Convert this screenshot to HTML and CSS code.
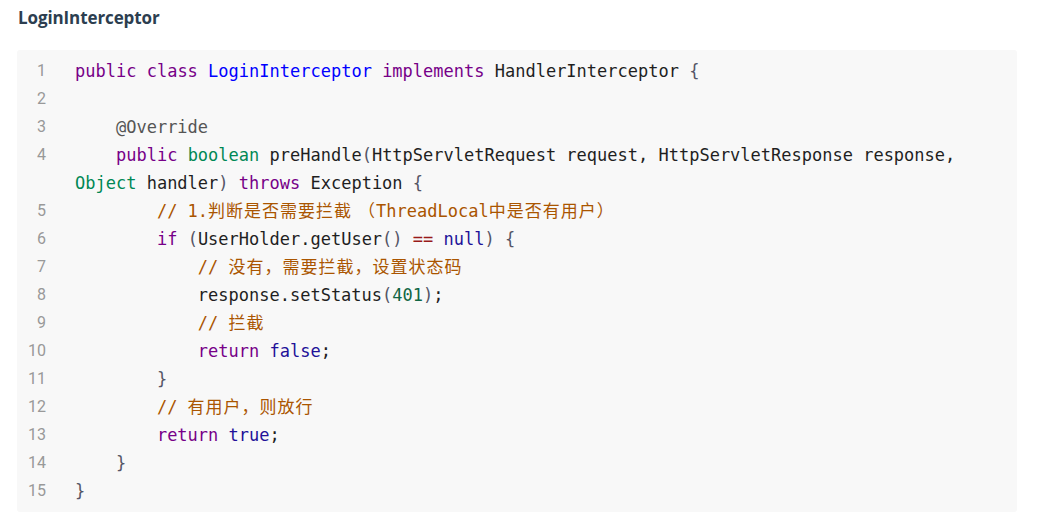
FILE: index.html
```html
<!DOCTYPE html>
<html lang="zh-CN">
<head>
<meta charset="utf-8">
<title>LoginInterceptor</title>
<link rel="stylesheet" href="styles.css">
</head>
<body>
<h4 class="title">LoginInterceptor</h4>
<div class="code-block">
<div class="row"><span class="ln">1</span><span class="code"><span class="kw">public</span> <span class="kw">class</span> <span class="def">LoginInterceptor</span> <span class="kw">implements</span> HandlerInterceptor <span class="br">{</span></span></div>
<div class="row"><span class="ln">2</span><span class="code"> </span></div>
<div class="row"><span class="ln">3</span><span class="code">    <span class="meta">@Override</span></span></div>
<div class="row"><span class="ln">4</span><span class="code">    <span class="kw">public</span> <span class="ty">boolean</span> preHandle<span class="br">(</span>HttpServletRequest request, HttpServletResponse response, <span class="ty">Object</span> handler<span class="br">)</span> <span class="kw">throws</span> Exception <span class="br">{</span></span></div>
<div class="row"><span class="ln">5</span><span class="code">        <span class="cm">// 1.<span class="cj">判断是否需要拦截<span class="paren open">（</span></span>ThreadLocal<span class="cj">中是否有用户<span class="paren close">）</span></span></span></span></div>
<div class="row"><span class="ln">6</span><span class="code">        <span class="kw">if</span> <span class="br">(</span>UserHolder.getUser<span class="br">()</span> <span class="op">==</span> <span class="atom">null</span><span class="br">)</span> <span class="br">{</span></span></div>
<div class="row"><span class="ln">7</span><span class="code">            <span class="cm">// <span class="cj">没有，需要拦截，设置状态码</span></span></span></div>
<div class="row"><span class="ln">8</span><span class="code">            response.setStatus<span class="br">(</span><span class="num">401</span><span class="br">)</span>;</span></div>
<div class="row"><span class="ln">9</span><span class="code">            <span class="cm">// <span class="cj">拦截</span></span></span></div>
<div class="row"><span class="ln">10</span><span class="code">            <span class="kw">return</span> <span class="atom">false</span>;</span></div>
<div class="row"><span class="ln">11</span><span class="code">        <span class="br">}</span></span></div>
<div class="row"><span class="ln">12</span><span class="code">        <span class="cm">// <span class="cj">有用户，则放行</span></span></span></div>
<div class="row"><span class="ln">13</span><span class="code">        <span class="kw">return</span> <span class="atom">true</span>;</span></div>
<div class="row"><span class="ln">14</span><span class="code">    <span class="br">}</span></span></div>
<div class="row"><span class="ln">15</span><span class="code"><span class="br">}</span></span></div>
</div>
</body>
</html>
```
FILE: styles.css
```css
html, body {
  margin: 0;
  padding: 0;
  background: #ffffff;
}

body {
  font-family: "Open Sans", "Noto Sans", sans-serif;
}

.title {
  margin: 0;
  padding: 6px 0 0 18px;
  height: 50px;
  box-sizing: border-box;
  font-size: 17px;
  font-weight: 700;
  line-height: 24px;
  color: #2c3e50;
  letter-spacing: -0.1px;
}

.code-block {
  margin: 0 0 0 17px;
  width: 1000px;
  box-sizing: border-box;
  background: #f8f8f8;
  border-radius: 3px;
  padding: 7px 20px 7px 0;
}

.row {
  display: flex;
  align-items: flex-start;
}

.ln {
  flex: 0 0 29px;
  text-align: right;
  font-family: Roboto, "Liberation Sans", sans-serif;
  font-size: 16px;
  line-height: 28px;
  color: #999999;
}

.code {
  flex: 1;
  margin-left: 29px;
  white-space: pre-wrap;
  font-family: "DejaVu Sans Mono", "Noto Sans CJK SC", monospace;
  font-size: 17px;
  line-height: 28px;
  color: #1f1f1f;
}

.cj {
  font-family: "Noto Sans CJK SC", sans-serif;
  letter-spacing: 1px;
  line-height: 1;
}

.paren {
  display: inline-block;
  width: 24px;
}

.paren.open {
  text-align: right;
}

.paren.close {
  text-align: left;
}

.kw { color: #770088; }
.def { color: #0000ff; }
.ty { color: #008855; }
.cm { color: #aa5500; }
.meta { color: #555555; }
.num { color: #116644; }
.atom { color: #221199; }
.op { color: #981a1a; }
.br { color: #555566; }
```
